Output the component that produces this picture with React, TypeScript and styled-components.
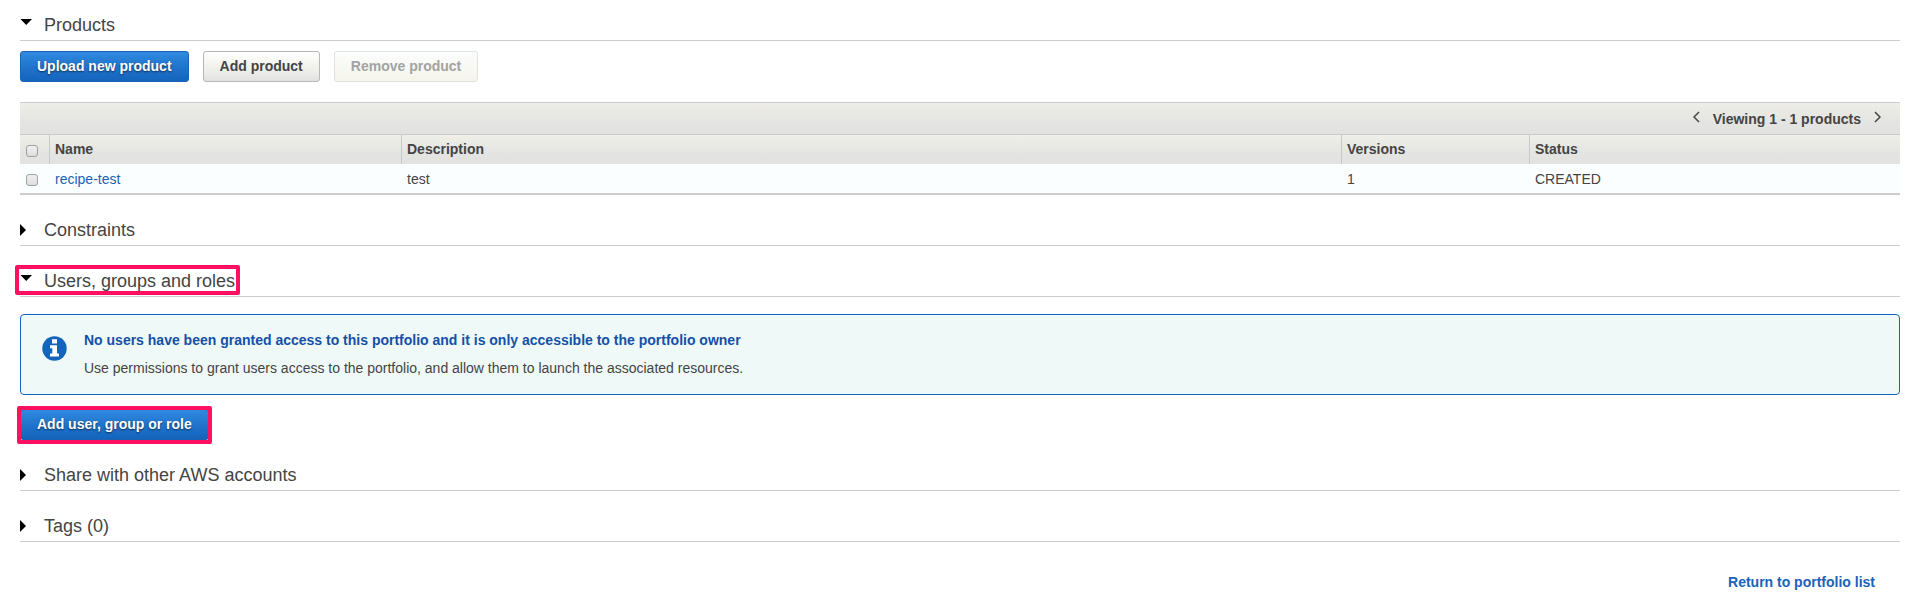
import React, { useState } from "react";
import styled, { createGlobalStyle, css } from "styled-components";

const GlobalStyle = createGlobalStyle`
  * { box-sizing: border-box; }
  body {
    margin: 0;
    background: #fff;
    color: #444;
    font: 14px/20px "Liberation Sans", Arial, sans-serif;
  }
`;

const Page = styled.main`
  padding: 15px 8px 0 20px;
`;

const Section = styled.section`
  & + & { margin-top: 25px; }
`;

const SectionHeading = styled.h2`
  margin: 0;
  padding-bottom: 5px;
  border-bottom: 1px solid #c8cdd0;
  font-size: 18px;
  font-weight: 400;
  line-height: 20px;
`;

const Toggle = styled.button`
  position: relative;
  display: flex;
  align-items: center;
  padding: 0;
  border: 0;
  background: none;
  color: inherit;
  font: inherit;
  cursor: pointer;
`;

const Arrow = styled.svg<{ $open: boolean }>`
  width: 12px;
  height: 12px;
  margin-right: 12px;
  margin-bottom: ${(p) => (p.$open ? 6 : 0)}px;
  fill: #000;
`;

const ToggleHighlight = styled.span`
  position: absolute;
  inset: -6px -5px -4px -5px;
  border: 4px solid #ff1060;
  border-radius: 2px;
  pointer-events: none;
`;

const ButtonRow = styled.div`
  display: flex;
  gap: 14px;
  padding: 10px 0 20px;
`;

const Button = styled.button<{ $primary?: boolean }>`
  height: 31px;
  padding: 0 16px 2px;
  border: 1px solid #b8b8b8;
  border-radius: 3px;
  background: linear-gradient(#fff, #f2f2ec 50%, #e2e2e2);
  color: #444;
  font: bold 14px/20px "Liberation Sans", Arial, sans-serif;
  cursor: pointer;

  &:disabled {
    border-color: #e2e2de;
    background: linear-gradient(#fcfefe, #f4f4ea);
    color: #a3a3a3;
    cursor: default;
  }

  ${(p) =>
    p.$primary &&
    css`
      border-color: #1a62b4;
      background: linear-gradient(#2f8ae0, #1e70c8 60%, #1464bc);
      color: #fff;
      text-shadow: 0 1px 2px rgba(0, 0, 0, 0.6);
    `}
`;

const HighlightFrame = styled.div`
  position: relative;
  width: fit-content;
  margin-top: 14px;

  &::after {
    content: "";
    position: absolute;
    inset: -3px -3px -4px;
    border: 4px solid #ff1060;
    border-radius: 2px;
    pointer-events: none;
  }
`;

const TableToolbar = styled.div`
  display: flex;
  justify-content: flex-end;
  align-items: center;
  gap: 13px;
  height: 32px;
  padding-right: 19px;
  border-top: 1px solid #c8cdd4;
  background: linear-gradient(#eeeee6, #e4e4e2 60%, #e2e2e2);
  font-weight: bold;
`;

const PagerButton = styled.button`
  display: flex;
  padding: 0 0 3px;
  border: 0;
  background: none;
  color: #444;
  cursor: pointer;
`;

const Table = styled.table`
  width: 100%;
  table-layout: fixed;
  border-collapse: separate;
  border-spacing: 0;
  text-align: left;
`;

const CheckCol = styled.col` width: 30px; `;
const NameCol = styled.col` width: 352px; `;
const VersionsCol = styled.col` width: 188px; `;
const StatusCol = styled.col` width: 370px; `;

const HeadCell = styled.th`
  height: 30px;
  padding: 0 5px 2px;
  border-top: 1px solid #ccc8cc;
  border-right: 1px solid #c8c8cc;
  background: linear-gradient(#f0f0e8, #e4e4e2 60%, #e2e2e2);

  &:last-child { border-right: 0; }
`;

const Cell = styled.td`
  height: 31px;
  padding: 0 5px;
  border-bottom: 2px solid #ccc;
  background: #fbfeff;
`;

const Checkbox = styled.input`
  appearance: none;
  display: block;
  width: 12px;
  height: 12px;
  margin: 2px 0 0 1px;
  border: 1px solid #a0a0a0;
  border-radius: 3px;
  background: linear-gradient(#f0f0f0, #dedede);

  ${HeadCell} & { margin-top: 4px; }

  &:checked { background: #1e70c8; }
`;

const Link = styled.a<{ $strong?: boolean }>`
  color: #1a62b8;
  font-weight: ${(p) => (p.$strong ? "bold" : "normal")};
  text-decoration: none;
  &:hover { text-decoration: underline; }
`;

const Notice = styled.div`
  display: flex;
  gap: 17px;
  min-height: 81px;
  margin-top: 17px;
  padding: 15px 21px;
  border: 1px solid #1464bc;
  border-radius: 4px;
  background: #eff9f7;
`;

const InfoIcon = styled.svg`
  flex: none;
  width: 25px;
  height: 25px;
  margin-top: 6px;
`;

const NoticeTitle = styled.strong`
  display: block;
  margin-bottom: 8px;
  color: #1450a8;
`;

const NoticeText = styled.p`
  margin: 0;
`;

const Footer = styled.footer`
  display: flex;
  justify-content: flex-end;
  padding: 30px 25px 6px 0;
`;

function Heading({
  title,
  open,
  highlighted,
  onToggle,
}: {
  title: string;
  open: boolean;
  highlighted?: boolean;
  onToggle: () => void;
}) {
  return (
    <SectionHeading>
      <Toggle type="button" aria-expanded={open} onClick={onToggle}>
        <Arrow $open={open} viewBox="0 0 12 12" aria-hidden="true">
          <path d={open ? "M0.5 3h11.5L6.2 9z" : "M0 0l6 6-6 6z"} />
        </Arrow>
        {title}
        {highlighted && <ToggleHighlight />}
      </Toggle>
    </SectionHeading>
  );
}

function Chevron({ d }: { d: string }) {
  return (
    <svg width="7" height="12" viewBox="0 0 7 12" fill="none" stroke="currentColor" strokeWidth="1.5" aria-hidden="true">
      <path d={d} />
    </svg>
  );
}

export default function App() {
  const [open, setOpen] = useState<Record<string, boolean>>({ products: true, users: true });
  const toggle = (key: string) => () => setOpen((o) => ({ ...o, [key]: !o[key] }));

  return (
    <>
      <GlobalStyle />
      <Page>
        <Section>
          <Heading title="Products" open={!!open.products} onToggle={toggle("products")} />
          {open.products && (
            <>
              <ButtonRow>
                <Button type="button" $primary>Upload new product</Button>
                <Button type="button">Add product</Button>
                <Button type="button" disabled>Remove product</Button>
              </ButtonRow>
              <TableToolbar>
                <PagerButton type="button" aria-label="Previous page">
                  <Chevron d="M6 1L1 6l5 5" />
                </PagerButton>
                <span>Viewing 1 - 1 products</span>
                <PagerButton type="button" aria-label="Next page">
                  <Chevron d="M1 1l5 5-5 5" />
                </PagerButton>
              </TableToolbar>
              <Table>
                <colgroup>
                  <CheckCol />
                  <NameCol />
                  <col />
                  <VersionsCol />
                  <StatusCol />
                </colgroup>
                <thead>
                  <tr>
                    <HeadCell><Checkbox type="checkbox" aria-label="Select all products" /></HeadCell>
                    <HeadCell>Name</HeadCell>
                    <HeadCell>Description</HeadCell>
                    <HeadCell>Versions</HeadCell>
                    <HeadCell>Status</HeadCell>
                  </tr>
                </thead>
                <tbody>
                  <tr>
                    <Cell><Checkbox type="checkbox" aria-label="Select recipe-test" /></Cell>
                    <Cell><Link href="#recipe-test">recipe-test</Link></Cell>
                    <Cell>test</Cell>
                    <Cell>1</Cell>
                    <Cell>CREATED</Cell>
                  </tr>
                </tbody>
              </Table>
            </>
          )}
        </Section>

        <Section>
          <Heading title="Constraints" open={!!open.constraints} onToggle={toggle("constraints")} />
        </Section>

        <Section>
          <Heading title="Users, groups and roles" open={!!open.users} highlighted onToggle={toggle("users")} />
          {open.users && (
            <>
              <Notice>
                <InfoIcon viewBox="0 0 25 25" aria-hidden="true">
                  <circle cx="12.5" cy="12.5" r="12.2" fill="#1464bc" />
                  <path fill="#fff" d="M10 3.2h5v4.3h-5zM8 9.2h7v8.3h2v3H8v-3h2.3v-5.3H8z" />
                </InfoIcon>
                <div>
                  <NoticeTitle>
                    No users have been granted access to this portfolio and it is only accessible to the portfolio owner
                  </NoticeTitle>
                  <NoticeText>
                    Use permissions to grant users access to the portfolio, and allow them to launch the associated resources.
                  </NoticeText>
                </div>
              </Notice>
              <HighlightFrame>
                <Button type="button" $primary>Add user, group or role</Button>
              </HighlightFrame>
            </>
          )}
        </Section>

        <Section>
          <Heading title="Share with other AWS accounts" open={!!open.share} onToggle={toggle("share")} />
        </Section>

        <Section>
          <Heading title="Tags (0)" open={!!open.tags} onToggle={toggle("tags")} />
        </Section>

        <Footer>
          <Link href="#portfolios" $strong>Return to portfolio list</Link>
        </Footer>
      </Page>
    </>
  );
}
